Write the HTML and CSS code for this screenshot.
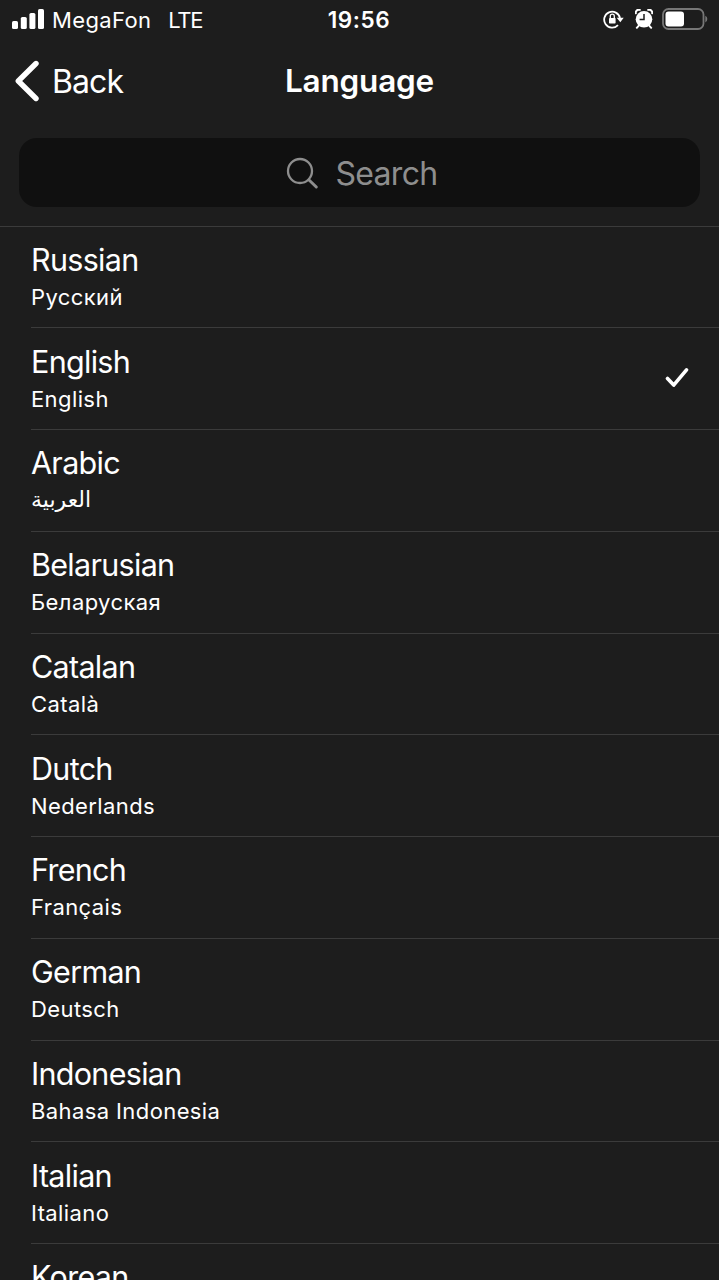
FILE: index.html
```html
<!DOCTYPE html>
<html lang="en">
<head>
<meta charset="utf-8">
<title>Language</title>
<link rel="stylesheet" href="styles.css">
</head>
<body>
<div class="screen">
  <header class="header">
    <div class="status">
      <div class="status-left">
        <svg class="signal" width="32" height="20" viewBox="0 0 32 20" fill="#fff"><rect x="0" y="12" width="6" height="8" rx="1.6"/><rect x="8.8" y="8" width="6" height="12" rx="1.6"/><rect x="17.4" y="4" width="6" height="16" rx="1.6"/><rect x="26" y="0" width="6" height="20" rx="1.6"/></svg>
        <span class="carrier">MegaFon</span>
        <span class="network">LTE</span>
      </div>
      <time class="clock">19:56</time>
      <div class="status-right">
        <svg width="21" height="20" viewBox="0 0 21 20" fill="none" stroke="#fff" stroke-width="1.8"><path d="M15 16.2A8 8 0 1 1 17 9"/><path d="M13.7 8.7h7l-3.4 4.6z" fill="#fff" stroke="none"/><rect x="6" y="9" width="6.6" height="5.4" rx=".7" fill="#fff" stroke="none"/><path d="M7.3 9V7.2a2 2 0 0 1 4 0V9" stroke-width="1.3"/></svg>
        <svg class="alarm" width="18" height="20" viewBox="0 0 18 20"><circle cx="9" cy="10.3" r="8.3" fill="#fff"/><path d="M.8 4.3A3 3 0 0 1 4.8.9M17.2 4.3A3 3 0 0 0 13.2.9M3.6 16.8l-1.8 2M14.4 16.8l1.8 2" fill="none" stroke="#fff" stroke-width="2" stroke-linecap="round"/><path d="M9 5v5.6H4.6" fill="none" stroke="#1d1d1d" stroke-width="1.5"/></svg>
        <svg class="battery" width="46" height="23" viewBox="0 0 46 23"><rect x="1" y="1" width="40.5" height="20" rx="5.5" fill="none" stroke="#777" stroke-width="1.8"/><rect x="3.5" y="3.5" width="18.5" height="15" rx="3" fill="#fff"/><path d="M43.3 7.8q2 1 2 3.3t-2 3.3z" fill="#777"/></svg>
      </div>
    </div>
    <nav class="nav">
      <div class="back">
        <svg width="25" height="42" viewBox="0 0 25 42" fill="none" stroke="#fff" stroke-width="5.4" stroke-linecap="round" stroke-linejoin="round"><path d="M21 3.5 3.3 21 21 38.5"/></svg>
        <span>Back</span>
      </div>
      <h1 class="title">Language</h1>
    </nav>
    <div class="search">
      <svg width="33" height="33" viewBox="0 0 33 33" fill="none" stroke="#8e8e8e" stroke-linecap="round"><circle cx="14" cy="14" r="12" stroke-width="2.3"/><path d="m23 23 7.3 7" stroke-width="3"/></svg>
      <span>Search</span>
    </div>
  </header>
  <ul class="list">
    <li class="row"><span class="name">Russian</span><span class="native">Русский</span></li>
    <li class="row"><span class="name">English</span><span class="native">English</span><svg class="check" width="24" height="21" viewBox="0 0 24 21" fill="none" stroke="#fff" stroke-width="3.6" stroke-linecap="round" stroke-linejoin="round"><path d="m2.5 11.5 6.2 6.6L21.5 2.8"/></svg></li>
    <li class="row"><span class="name">Arabic</span><span class="native arabic" lang="ar">العربية</span></li>
    <li class="row"><span class="name">Belarusian</span><span class="native">Беларуская</span></li>
    <li class="row"><span class="name">Catalan</span><span class="native">Català</span></li>
    <li class="row"><span class="name">Dutch</span><span class="native">Nederlands</span></li>
    <li class="row"><span class="name">French</span><span class="native">Français</span></li>
    <li class="row"><span class="name">German</span><span class="native">Deutsch</span></li>
    <li class="row"><span class="name">Indonesian</span><span class="native">Bahasa Indonesia</span></li>
    <li class="row"><span class="name">Italian</span><span class="native">Italiano</span></li>
    <li class="row"><span class="name">Korean</span></li>
  </ul>
</div>
</body>
</html>
```
FILE: styles.css
```css
* { box-sizing: border-box; }
body { margin: 0; background: #1d1d1d; color: #fff; font-family: Inter, sans-serif; }
svg { display: block; flex: none; }
.screen { height: 1280px; overflow: hidden; }
.header { height: 227px; border-bottom: 1px solid #3b3b3b; }
.status { display: grid; grid-template-columns: 1fr auto 1fr; align-items: center; height: 40px; padding: 0 11px 0 12px; }
.status-left { display: flex; align-items: center; font-size: 22px; line-height: 28px; }
.signal { margin-top: -2px; }
.carrier { margin-left: 8px; letter-spacing: .35px; }
.network { margin-left: 17px; letter-spacing: -1.3px; }
.clock { margin-left: -2px; font-size: 22.5px; font-weight: 600; line-height: 28px; letter-spacing: .6px; }
.status-right { display: flex; justify-content: flex-end; align-items: center; margin-top: -2px; }
.alarm { margin-left: 11px; }
.battery { margin-left: 9px; }
.nav { display: grid; grid-template-columns: 1fr auto 1fr; align-items: center; height: 82px; padding: 0 15px; }
.back { display: flex; align-items: center; gap: 12px; font-size: 32px; letter-spacing: -.9px; }
.title { margin: -2px 0 0; font-size: 31.5px; font-weight: 600; letter-spacing: -.2px; }
.search { display: flex; align-items: center; justify-content: center; gap: 17px; height: 69px; margin: 16px 19px 0; padding: 1px 0 0 4px; border-radius: 18px; background: #101010; color: #8e8e8e; font-size: 32px; letter-spacing: -.7px; }
.list { margin: 0; padding: 0 0 0 31px; list-style: none; }
.row { display: grid; grid-template-columns: 1fr auto; grid-template-rows: 38px 28px; row-gap: 4px; align-content: start; height: 101.75px; padding: 14.25px 30px 0 0; border-bottom: 1px solid #3b3b3b; }
.row:first-child { height: 101.25px; padding-top: 13.75px; }
.name { font-size: 30.5px; line-height: 38px; letter-spacing: -.7px; }
.native { grid-column: 1; font-size: 22px; line-height: 28px; letter-spacing: .4px; }
.arabic { font-family: "DejaVu Sans", sans-serif; letter-spacing: 0; }
.check { grid-column: 2; grid-row: 1 / 3; align-self: center; }
```
